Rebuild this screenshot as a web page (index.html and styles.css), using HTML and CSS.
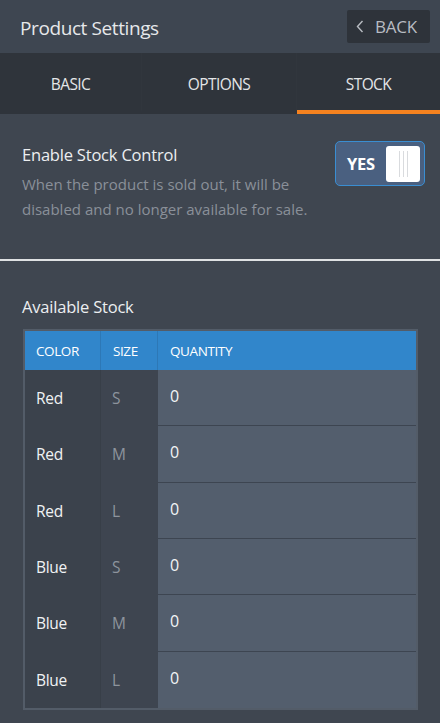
FILE: index.html
```html
<!DOCTYPE html>
<html lang="en">
<head>
<meta charset="utf-8">
<title>Product Settings</title>
<link rel="stylesheet" href="styles.css">
</head>
<body>
<div class="app">
  <header class="topbar">
    <h1 class="title">Product Settings</h1>
    <button class="back" type="button">
      <svg class="chev" width="8" height="13" viewBox="0 0 8 13"><path d="M6.5 1 L1.5 6.5 L6.5 12" fill="none" stroke="#b8bcc2" stroke-width="1.4"/></svg>
      <span>BACK</span>
    </button>
  </header>
  <nav class="tabs">
    <div class="tab">BASIC</div>
    <div class="tab">OPTIONS</div>
    <div class="tab active">STOCK</div>
  </nav>
  <section class="setting">
    <div class="setting-text">
      <h2 class="label">Enable Stock Control</h2>
      <p class="desc">When the product is sold out, it will be disabled and no longer available for sale.</p>
    </div>
    <div class="toggle">
      <span class="toggle-text">YES</span>
      <span class="knob"><i></i><i></i><i></i></span>
    </div>
  </section>
  <div class="divider"></div>
  <section class="stock">
    <h2 class="label">Available Stock</h2>
    <table class="grid">
      <thead>
        <tr><th class="c-color">COLOR</th><th class="c-size">SIZE</th><th class="c-qty">QUANTITY</th></tr>
      </thead>
      <tbody>
        <tr><td class="c-color">Red</td><td class="c-size">S</td><td class="c-qty">0</td></tr>
        <tr><td class="c-color">Red</td><td class="c-size">M</td><td class="c-qty">0</td></tr>
        <tr><td class="c-color">Red</td><td class="c-size">L</td><td class="c-qty">0</td></tr>
        <tr><td class="c-color">Blue</td><td class="c-size">S</td><td class="c-qty">0</td></tr>
        <tr><td class="c-color">Blue</td><td class="c-size">M</td><td class="c-qty">0</td></tr>
        <tr><td class="c-color">Blue</td><td class="c-size">L</td><td class="c-qty">0</td></tr>
      </tbody>
    </table>
  </section>
</div>
</body>
</html>
```
FILE: styles.css
```css
* { box-sizing: border-box; }
html, body { margin: 0; padding: 0; }
body {
  background: #3f4650;
  font-family: "Open Sans", "Noto Sans", sans-serif;
  color: #eceef0;
  width: 440px;
  height: 723px;
  overflow: hidden;
}
.app { display: flex; flex-direction: column; }

.topbar {
  height: 53px;
  background: #3e4651;
  display: flex;
  align-items: center;
  justify-content: space-between;
  padding: 0 10px 0 20px;
}
.title {
  margin: 0;
  font-size: 19px;
  font-weight: 400;
  color: #e6e8ea;
  letter-spacing: -0.4px;
  padding-top: 2px;
}
.back {
  width: 83px;
  height: 33px;
  margin-top: -1px;
  background: #2e333a;
  border: 0;
  border-radius: 2px;
  display: flex;
  align-items: center;
  padding: 0 0 0 9px;
  gap: 11px;
  font-family: inherit;
  font-size: 17px;
  color: #b8bcc2;
  letter-spacing: -0.2px;
}
.chev { display: block; }

.tabs {
  height: 61px;
  background: #2f343b;
  display: grid;
  grid-template-columns: 142px 155px 1fr;
}
.tab {
  display: flex;
  align-items: center;
  justify-content: center;
  padding-top: 5px;
  font-size: 15.5px;
  color: #e4e6e8;
  letter-spacing: -0.6px;
  border-right: 1px solid #31363d;
  border-bottom: 4px solid transparent;
}
.tab:last-child { border-right: 0; }
.tab.active { border-bottom-color: #f5821f; }

.setting {
  display: flex;
  justify-content: space-between;
  align-items: flex-start;
  padding: 27px 15px 0 22px;
  height: 145px;
}
.label {
  margin: 0;
  font-size: 16.5px;
  line-height: 23px;
  font-weight: 400;
  color: #eceef0;
  letter-spacing: -0.2px;
}
.setting .label { margin-top: 2px; }
.desc {
  margin: 6px 0 0;
  font-size: 15px;
  line-height: 25px;
  color: #8a9099;
  letter-spacing: 0;
  width: 300px;
}
.toggle {
  width: 90px;
  height: 45px;
  border: 1px solid #3a8ed2;
  border-radius: 5px;
  background: #4a6080;
  display: flex;
  align-items: center;
  justify-content: space-between;
  padding: 0 4px 0 11px;
}
.toggle-text {
  font-weight: 700;
  font-size: 16.5px;
  color: #ffffff;
  letter-spacing: -0.3px;
}
.knob {
  width: 34px;
  height: 36px;
  background: #ffffff;
  border-radius: 3px;
  display: flex;
  justify-content: center;
  align-items: center;
  gap: 3px;
}
.knob i {
  display: block;
  width: 1px;
  height: 26px;
  background: #d9dbde;
}

.divider {
  height: 2px;
  background: #dfe1e3;
}

.stock {
  padding: 34px 22px 0 22px;
}
.grid {
  margin: 11px 0 0 1px;
  width: 395px;
  border: 2px solid #535c68;
  border-collapse: separate;
  border-spacing: 0;
  table-layout: fixed;
}
.grid th {
  height: 39px;
  background: #3186cb;
  color: #ffffff;
  font-weight: 400;
  font-size: 13.5px;
  letter-spacing: -0.4px;
  text-align: left;
  padding: 0 0 0 11px;
  border-right: 1px solid #2d78b6;
}
.grid th:last-child { border-right: 0; padding-left: 12px; }
.grid th.c-size { padding-left: 12px; }
.c-color { width: 76px; }
.c-size { width: 57px; }
.grid td {
  height: 56.33px;
  padding: 0 0 0 11px;
  font-size: 15.5px;
  letter-spacing: -0.3px;
}
.grid td.c-color { background: #3b424c; color: #f0f2f4; border-right: 1px solid #383f48; }
.grid td.c-size { background: #3e4550; color: #8d949d; padding-left: 11px; }
.grid td.c-qty {
  background: #535e6d;
  color: #f2f4f6;
  font-size: 16px;
  padding: 0 0 3px 12px;
  border-bottom: 1px solid #3d4551;
}
.grid tr:last-child td.c-qty { border-bottom: 0; }
```
